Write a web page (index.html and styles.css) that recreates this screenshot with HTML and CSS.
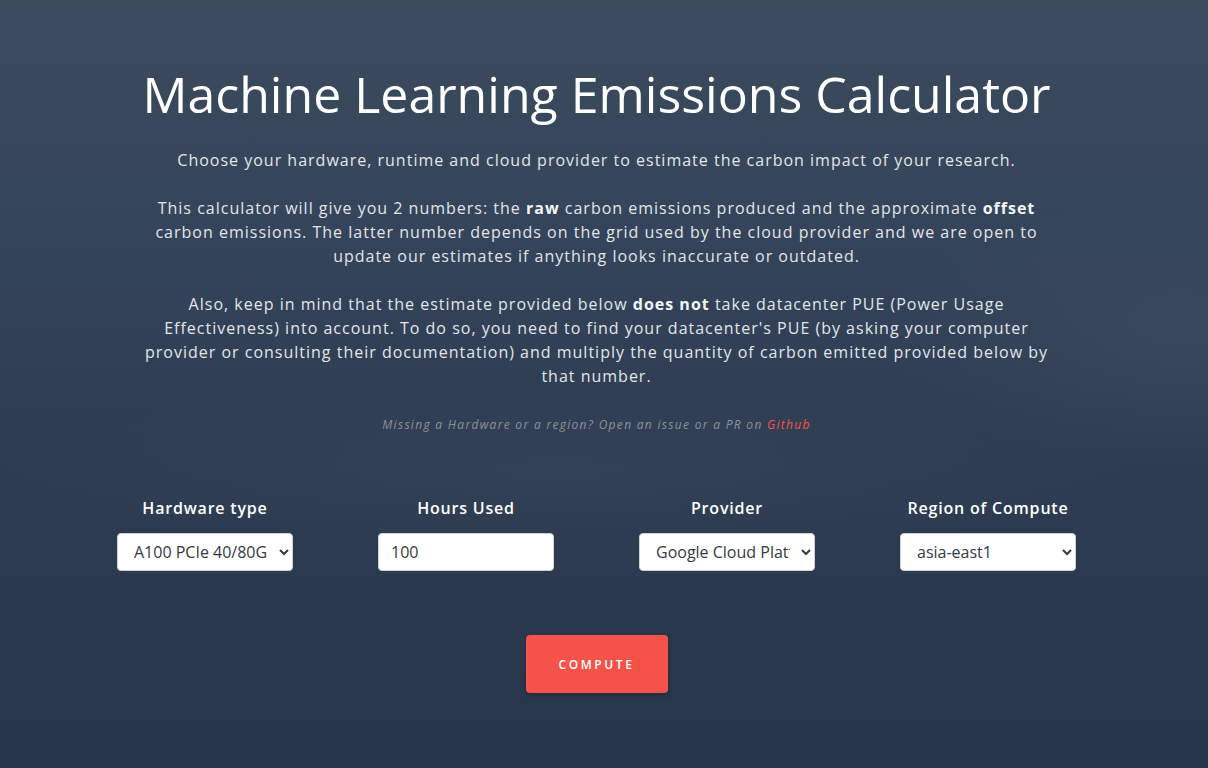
FILE: index.html
```html
<!DOCTYPE html>
<html lang="en">
<head>
<meta charset="utf-8">
<title>Machine Learning Emissions Calculator</title>
<link rel="stylesheet" href="styles.css">
</head>
<body>
<main class="page">
  <section class="intro">
    <h1 class="title">Machine Learning Emissions Calculator</h1>
    <p class="lead">Choose your hardware, runtime and cloud provider to estimate the carbon impact of your research.</p>
    <p class="lead">This calculator will give you 2 numbers: the <b>raw</b> carbon emissions produced and the approximate <b>offset</b> carbon emissions. The latter number depends on the grid used by the cloud provider and we are open to update our estimates if anything looks inaccurate or outdated.</p>
    <p class="lead">Also, keep in mind that the estimate provided below <b>does not</b> take datacenter PUE (Power Usage Effectiveness) into account. To do so, you need to find your datacenter's PUE (by asking your computer provider or consulting their documentation) and multiply the quantity of carbon emitted provided below by that number.</p>
    <p class="note">Missing a Hardware or a region? Open an issue or a PR on <a class="note-link" href="#">Github</a></p>
  </section>
  <form class="form">
    <div class="fields">
      <div class="field">
        <label class="label" for="hw">Hardware type</label>
        <select class="control" id="hw"><option>A100 PCIe 40/80GB</option></select>
      </div>
      <div class="field">
        <label class="label" for="hours">Hours Used</label>
        <input class="control input" id="hours" type="text" value="100">
      </div>
      <div class="field">
        <label class="label" for="prov">Provider</label>
        <select class="control" id="prov"><option>Google Cloud Platform</option></select>
      </div>
      <div class="field">
        <label class="label" for="reg">Region of Compute</label>
        <select class="control" id="reg"><option>asia-east1</option></select>
      </div>
    </div>
    <div class="actions">
      <button class="btn" type="button">Compute</button>
    </div>
  </form>
</main>
</body>
</html>
```
FILE: styles.css
```css
html, body {
  margin: 0;
  padding: 0;
  height: 100%;
}
body {
  font-family: "Open Sans", "Liberation Sans", sans-serif;
  color: #e6e8ea;
  background:
    radial-gradient(ellipse 420px 200px at 1180px 330px, rgba(70, 85, 100, 0.35), transparent 70%),
    radial-gradient(ellipse 900px 120px at 560px 470px, rgba(60, 75, 92, 0.35), transparent 70%),
    linear-gradient(180deg, #3c4b5c 0%, #34445a 30%, #2d3c51 60%, #28364a 100%);
  overflow: hidden;
}
.page {
  width: 1193px;
  box-sizing: border-box;
  padding-top: 62px;
  display: flex;
  flex-direction: column;
  align-items: center;
}
.intro {
  width: 908px;
  text-align: center;
}
.title {
  margin: 0 0 22px;
  font-weight: 400;
  font-size: 50px;
  line-height: 64px;
  color: #ffffff;
  white-space: nowrap;
}
.lead {
  margin: 0 0 24px;
  font-size: 16px;
  line-height: 24px;
  letter-spacing: 1px;
  color: #e3e5e8;
}
.lead b {
  font-weight: 700;
  color: #f4f5f6;
}
.note {
  margin: 28px 0 0;
  font-size: 12px;
  line-height: 18px;
  font-style: italic;
  letter-spacing: 1.3px;
  color: #8d9197;
}
.note-link {
  color: #f5524a;
  text-decoration: none;
}
.form {
  margin-top: 63px;
  display: flex;
  flex-direction: column;
  align-items: center;
}
.fields {
  display: grid;
  grid-template-columns: repeat(4, 261px);
}
.field {
  display: flex;
  flex-direction: column;
  align-items: center;
  gap: 14px;
}
.label {
  font-size: 16px;
  line-height: 22px;
  font-weight: 600;
  letter-spacing: 0.8px;
  color: #ffffff;
}
.control {
  width: 176px;
  height: 38px;
  box-sizing: border-box;
  border: 1px solid #cfd3d8;
  border-radius: 4px;
  background: #ffffff;
  font-family: "Open Sans", "Liberation Sans", sans-serif;
  font-size: 16px;
  color: #333a42;
  padding: 0 8px 0 12px;
}
.input {
  padding-left: 12px;
}
.actions {
  margin-top: 64px;
}
.btn {
  width: 142px;
  height: 58px;
  border: none;
  border-radius: 4px;
  background: #f5524a;
  color: #ffffff;
  font-family: "Open Sans", "Liberation Sans", sans-serif;
  font-size: 12px;
  font-weight: 600;
  letter-spacing: 2.6px;
  text-transform: uppercase;
  box-shadow: 0 2px 6px rgba(0, 0, 0, 0.2);
}
```
